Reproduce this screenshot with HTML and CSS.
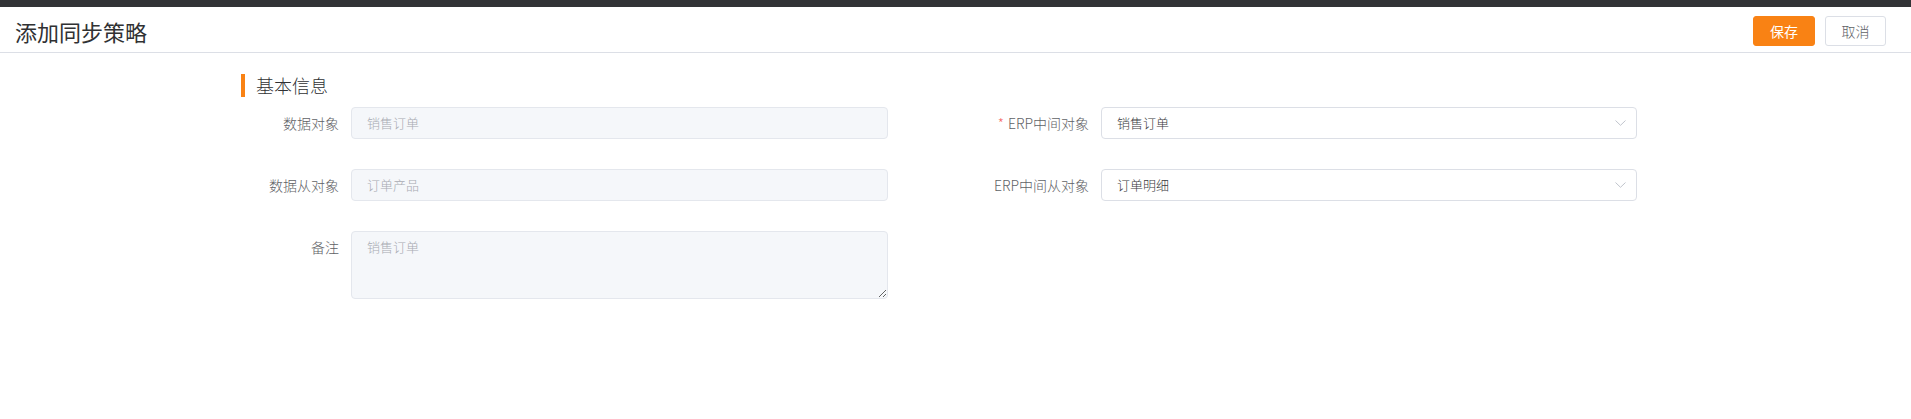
FILE: index.html
```html
<!DOCTYPE html>
<html lang="zh-CN">
<head>
<meta charset="utf-8">
<title>添加同步策略</title>
<link rel="stylesheet" href="styles.css">
</head>
<body>
<div class="topbar"></div>
<header class="header">
  <h1 class="title">添加同步策略</h1>
  <div class="actions">
    <button class="btn btn-primary" type="button">保存</button>
    <button class="btn btn-default" type="button">取消</button>
  </div>
</header>
<main class="form-wrap">
  <div class="section-title"><span class="bar"></span><span class="section-text">基本信息</span></div>
  <div class="form-grid">
    <div class="form-item">
      <label class="label">数据对象</label>
      <div class="control"><div class="input disabled">销售订单</div></div>
    </div>
    <div class="form-item">
      <label class="label"><span class="req">*</span>ERP中间对象</label>
      <div class="control">
        <div class="input select">
          <span>销售订单</span>
          <svg class="chev" width="11" height="6" viewBox="0 0 11 6"><path d="M0.5 0.5 L5.5 5.3 L10.5 0.5" fill="none" stroke="#c0c4cc" stroke-width="1"/></svg>
        </div>
      </div>
    </div>
    <div class="form-item">
      <label class="label">数据从对象</label>
      <div class="control"><div class="input disabled">订单产品</div></div>
    </div>
    <div class="form-item">
      <label class="label">ERP中间从对象</label>
      <div class="control">
        <div class="input select">
          <span>订单明细</span>
          <svg class="chev" width="11" height="6" viewBox="0 0 11 6"><path d="M0.5 0.5 L5.5 5.3 L10.5 0.5" fill="none" stroke="#c0c4cc" stroke-width="1"/></svg>
        </div>
      </div>
    </div>
    <div class="form-item">
      <label class="label">备注</label>
      <div class="control"><textarea class="textarea" readonly>销售订单</textarea></div>
    </div>
  </div>
</main>
</body>
</html>
```

FILE: styles.css
```css
* { box-sizing: border-box; }
html, body { margin: 0; padding: 0; background: #fff; }
body {
  font-family: "Noto Sans CJK SC", "Noto Sans", sans-serif;
  font-weight: 300;
  color: #606266;
  width: 1911px;
  height: 419px;
  overflow: hidden;
}
.topbar { height: 7px; background: #323336; }
.header {
  height: 46px;
  padding: 3px 25px 0 15px;
  border-bottom: 1px solid #dcdfe6;
  display: flex;
  align-items: center;
  justify-content: space-between;
}
.title {
  margin: 0;
  font-size: 22px;
  font-weight: 400;
  color: #303133;
  line-height: 30px;
}
.actions { display: flex; gap: 10px; }
.btn {
  height: 30px;
  padding: 0;
  white-space: nowrap;
  text-align: center;
  font-family: "Noto Sans CJK SC", sans-serif;
  font-weight: 400;
  font-size: 14px;
  line-height: 28px;
  border-radius: 3px;
  border: 1px solid #dcdfe6;
  background: #fff;
  color: #606266;
  cursor: pointer;
}
.btn-primary { background: #f98214; border-color: #f98214; color: #fff; width: 62px; }
.btn-default { width: 61px; font-weight: 300; }
.form-wrap { margin: 21px 0 0 241px; width: 1396px; }
.section-title { display: flex; align-items: center; height: 23px; }
.bar { width: 4px; height: 23px; background: #f98214; }
.section-text { margin-left: 11px; font-size: 18px; color: #303133; line-height: 23px; }
.form-grid {
  margin-top: 10px;
  display: grid;
  grid-template-columns: 647px 646px;
  column-gap: 103px;
  row-gap: 30px;
  align-items: start;
}
.form-item { display: flex; }
.label {
  width: 110px;
  flex: none;
  padding-right: 12px;
  text-align: right;
  font-size: 14px;
  line-height: 32px;
  color: #606266;
}
.req { color: #f56c6c; margin-right: 4px; }
.control { flex: 1; }
.input {
  height: 32px;
  padding: 0 15px;
  border: 1px solid #dcdfe6;
  border-radius: 4px;
  font-size: 13px;
  line-height: 30px;
  color: #3a3b3e;
  background: #fff;
}
.input.disabled { background: #f5f7fa; border-color: #e4e7ed; color: #a8abb2; }
.select { display: flex; align-items: center; justify-content: space-between; padding-right: 10px; }
.chev { display: block; }
.textarea {
  display: block;
  width: 100%;
  height: 68px;
  margin: 0;
  padding: 5px 15px;
  border: 1px solid #e4e7ed;
  border-radius: 4px;
  background: #f5f7fa;
  color: #a8abb2;
  font-family: "Noto Sans CJK SC", sans-serif;
  font-weight: 300;
  font-size: 13px;
  line-height: 1.5;
  resize: vertical;
  outline: none;
}
```
